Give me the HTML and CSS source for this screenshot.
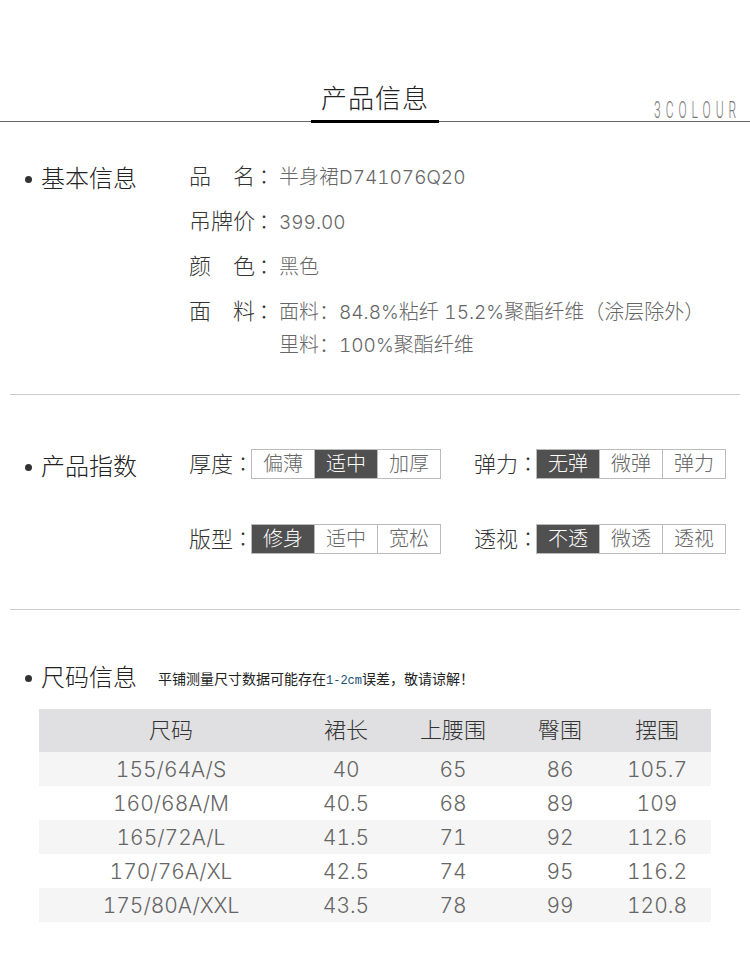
FILE: index.html
```html
<!DOCTYPE html>
<html lang="zh-CN">
<head>
<meta charset="utf-8">
<title>产品信息</title>
<link rel="stylesheet" href="styles.css">
</head>
<body>
<header class="topbar">
  <h1 class="title">产品信息</h1>
  <div class="brand"><span>3COLOUR</span></div>
</header>

<section class="block block-basic">
  <h2 class="heading"><i class="dot"></i>基本信息</h2>
  <dl class="facts">
    <div class="fact"><dt>品名</dt><span class="colon" lang="zh-TW">：</span><dd>半身裙<span class="num">D741076Q20</span></dd></div>
    <div class="fact"><dt>吊牌价</dt><span class="colon" lang="zh-TW">：</span><dd><span class="num">399.00</span></dd></div>
    <div class="fact"><dt>颜色</dt><span class="colon" lang="zh-TW">：</span><dd>黑色</dd></div>
    <div class="fact"><dt>面料</dt><span class="colon" lang="zh-TW">：</span><dd>面料：<span class="num">84.8%</span>粘纤 <span class="num">15.2%</span>聚酯纤维（涂层除外）<br>里料：<span class="num">100%</span>聚酯纤维</dd></div>
  </dl>
</section>
<hr class="rule">

<section class="block block-index">
  <h2 class="heading"><i class="dot"></i>产品指数</h2>
  <div class="metrics">
    <div class="metric"><span class="metric-name">厚度<span class="colon-inline" lang="zh-TW">：</span></span><div class="seg"><span>偏薄</span><span class="on">适中</span><span>加厚</span></div></div>
    <div class="metric"><span class="metric-name">弹力<span class="colon-inline" lang="zh-TW">：</span></span><div class="seg"><span class="on">无弹</span><span>微弹</span><span>弹力</span></div></div>
    <div class="metric"><span class="metric-name">版型<span class="colon-inline" lang="zh-TW">：</span></span><div class="seg"><span class="on">修身</span><span>适中</span><span>宽松</span></div></div>
    <div class="metric"><span class="metric-name">透视<span class="colon-inline" lang="zh-TW">：</span></span><div class="seg"><span class="on">不透</span><span>微透</span><span>透视</span></div></div>
  </div>
</section>
<hr class="rule">

<section class="block-size">
  <div class="size-head">
    <h2 class="heading"><i class="dot"></i>尺码信息</h2>
    <p class="note">平铺测量尺寸数据可能存在<span class="mono">1-2cm</span>误差，敬请谅解！</p>
  </div>
  <table class="sizes">
    <thead><tr><th>尺码</th><th>裙长</th><th>上腰围</th><th>臀围</th><th>摆围</th></tr></thead>
    <tbody>
      <tr><td>155/64A/S</td><td>40</td><td>65</td><td>86</td><td>105.7</td></tr>
      <tr><td>160/68A/M</td><td>40.5</td><td>68</td><td>89</td><td>109</td></tr>
      <tr><td>165/72A/L</td><td>41.5</td><td>71</td><td>92</td><td>112.6</td></tr>
      <tr><td>170/76A/XL</td><td>42.5</td><td>74</td><td>95</td><td>116.2</td></tr>
      <tr><td>175/80A/XXL</td><td>43.5</td><td>78</td><td>99</td><td>120.8</td></tr>
    </tbody>
  </table>
</section>
</body>
</html>
```

FILE: styles.css
```css
* { box-sizing: border-box; }
html, body { margin: 0; padding: 0; background: #fff; }
body {
  width: 750px;
  height: 967px;
  overflow: hidden;
  font-family: "Liberation Sans", "Noto Sans CJK SC", sans-serif;
  font-weight: 300;
  color: #333;
}
.topbar {
  height: 122px;
  border-bottom: 1px solid #666;
  display: grid;
  grid-template-columns: 311px 128px 1fr;
  align-items: end;
}
.title {
  grid-column: 2;
  margin: 0 0 -2px;
  height: 40px;
  border-bottom: 3px solid #000;
  font-size: 26px;
  line-height: 32px;
  font-weight: 300;
  letter-spacing: 1px;
  text-align: center;
  color: #222;
  white-space: nowrap;
}
.brand {
  grid-column: 3;
  justify-self: end;
  height: 20px;
  width: 84px;
  margin: 0 12px 1px 0;
}
.brand span {
  display: block;
  width: 168px;
  font-family: Roboto, sans-serif;
  font-weight: 300;
  font-size: 24px;
  line-height: 20px;
  letter-spacing: 10px;
  color: #777;
  white-space: nowrap;
  transform: scaleX(.5);
  transform-origin: 0 0;
}
.heading {
  margin: 0;
  display: flex;
  align-items: center;
  font-size: 24px;
  line-height: 32px;
  font-weight: 300;
  color: #222;
  white-space: nowrap;
  flex: none;
}
.dot {
  width: 7px;
  height: 7px;
  border-radius: 50%;
  background: #333;
  margin: 0 9px 0 25px;
}
.block { display: flex; align-items: flex-start; }
.block-basic { height: 272px; padding-top: 41px; }
.block-index { height: 214px; padding-top: 56px; }
.block .heading { width: 189px; }
.rule { margin: 0 10px; border: 0; border-top: 1px solid #ccc; height: 0; }
.facts { margin: -1px 0 0; }
.fact { display: flex; min-height: 45px; }
.fact dt {
  width: 66px;
  font-size: 22px;
  line-height: 30px;
  color: #333;
  text-align-last: justify;
  flex: none;
}
.colon {
  width: 24px;
  flex: none;
  font-family: "Noto Sans CJK TC", sans-serif;
  font-size: 20px;
  line-height: 30px;
  color: #333;
  text-indent: -1px;
}
.fact dd {
  margin: -1px 0 0;
  font-size: 20px;
  line-height: 32px;
  color: #666;
  white-space: nowrap;
}
.num {
  font-family: Inter, "Noto Sans CJK SC", sans-serif;
  font-size: 19px;
  font-weight: 300;
  font-variant-numeric: tabular-nums;
}
.metrics {
  display: grid;
  grid-template-columns: 285px 251px;
  row-gap: 45px;
  margin-top: -2px;
}
.metric { display: flex; align-items: center; height: 30px; }
.metric-name {
  width: 62px;
  font-size: 22px;
  line-height: 30px;
  color: #333;
  white-space: nowrap;
}
.colon-inline {
  font-family: "Noto Sans CJK TC", sans-serif;
  font-size: 20px;
}
.seg {
  display: flex;
  width: 190px;
  height: 30px;
  border: 1px solid #bbb;
  flex: none;
}
.seg span {
  flex: 1;
  border-left: 1px solid #bbb;
  text-align: center;
  font-size: 20px;
  line-height: 28px;
  color: #666;
}
.seg span:first-child { border-left: 0; }
.seg .on { background: #505050; color: #fff; }
.block-size { padding-top: 52px; }
.size-head { display: flex; align-items: center; }
.note {
  margin: 3px 0 0 21px;
  font-size: 14px;
  line-height: 20px;
  color: #222;
  font-weight: 400;
  white-space: nowrap;
}
.mono { font-family: "Liberation Mono", monospace; font-size: 12px; color: #1a4f72; }
.sizes {
  margin: 15px 0 0 39px;
  width: 672px;
  table-layout: fixed;
  border-collapse: collapse;
  text-align: center;
}
.sizes th:nth-child(1) { width: 264px; }
.sizes th:nth-child(2) { width: 86px; }
.sizes th:nth-child(3) { width: 128px; }
.sizes th:nth-child(4) { width: 86px; }
.sizes th:nth-child(5) { width: 108px; }
.sizes th {
  height: 43px;
  padding: 0;
  background: #e0e0e2;
  font-size: 22px;
  line-height: 30px;
  font-weight: 300;
  color: #333;
}
.sizes td {
  height: 34px;
  padding: 1px 0 0;
  font-family: Inter, sans-serif;
  font-size: 21px;
  font-weight: 300;
  font-variant-numeric: tabular-nums;
  line-height: 24px;
  color: #666;
}
.sizes tbody tr:nth-child(odd) td { background: #f5f5f5; }
```
